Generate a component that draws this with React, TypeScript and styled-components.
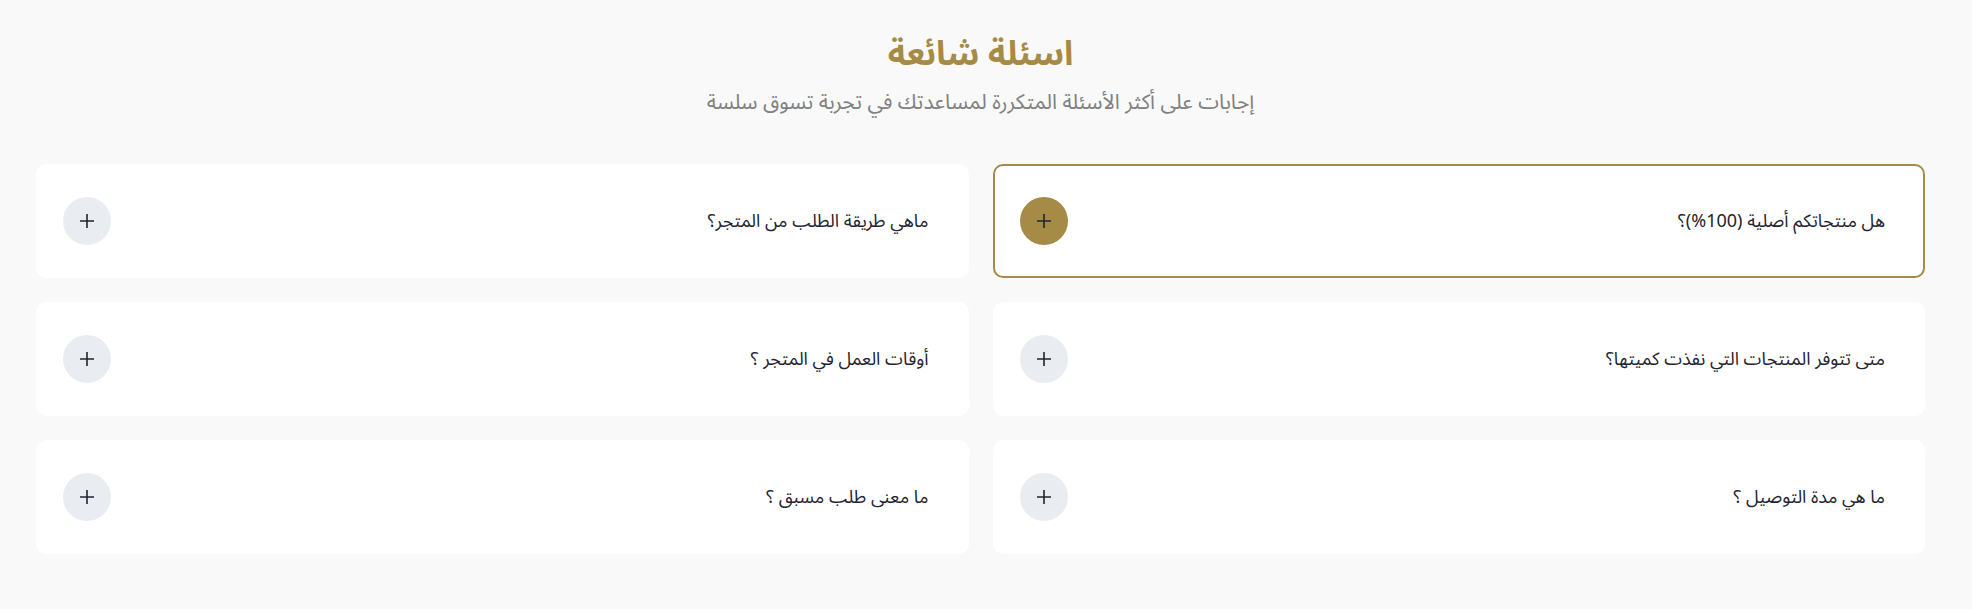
import React from 'react'
import styled, { createGlobalStyle } from 'styled-components'

const GlobalStyle = createGlobalStyle`
    html, body {
        margin: 0;
        padding: 0;
        background: #f9f9f9;
    }
    * {
        box-sizing: border-box;
    }
`;

const questions = [
    'هل منتجاتكم أصلية (100%)؟',
    'ماهي طريقة الطلب من المتجر؟',
    'متى تتوفر المنتجات التي نفذت كميتها؟',
    'أوقات العمل في المتجر ؟',
    'ما هي مدة التوصيل ؟',
    'ما معنى طلب مسبق ؟',
];

const PlusIcon = () => (
    <svg width="18" height="18" viewBox="0 0 18 18" fill="none">
        <path d="M9 2v14M2 9h14" stroke="#1f2430" strokeWidth="1.6" strokeLinecap="butt" />
    </svg>
);

const App = () => {
    return (
        <React.Fragment>
            <GlobalStyle />
            <Section dir="rtl">
                <Header>
                    <Title>اسئلة شائعة</Title>
                    <Subtitle>إجابات على أكثر الأسئلة المتكررة لمساعدتك في تجربة تسوق سلسة</Subtitle>
                </Header>
                <Grid>
                    {questions.map((q, i) => (
                        <Card key={q} $active={i === 0}>
                            <Question>{q}</Question>
                            <Toggle $active={i === 0} aria-label="expand">
                                <PlusIcon />
                            </Toggle>
                        </Card>
                    ))}
                </Grid>
            </Section>
        </React.Fragment>
    );
}

export default App

const Section = styled.section`
    font-family: 'Noto Sans Arabic', 'Noto Kufi Arabic', 'DejaVu Sans', sans-serif;
    padding: 28px 47px 56px 36px;
`;

const Header = styled.div`
    text-align: center;
`;

const Title = styled.h2`
    margin: 0;
    font-size: 34px;
    line-height: 52px;
    font-weight: 700;
    color: #a68b47;
`;

const Subtitle = styled.p`
    margin: 6px 0 0;
    font-size: 21px;
    line-height: 32px;
    font-weight: 400;
    color: #808080;
`;

const Grid = styled.div`
    margin-top: 46px;
    display: grid;
    grid-template-columns: 1fr 1fr;
    gap: 24px;
`;

const Card = styled.div<{ $active?: boolean }>`
    display: flex;
    align-items: center;
    justify-content: space-between;
    background: #ffffff;
    border: 2px solid ${p => (p.$active ? '#a68b47' : 'transparent')};
    border-radius: 10px;
    padding: 31px 38px 31px 25px;
`;

const Question = styled.span`
    font-size: 18px;
    color: #1f2430;
`;

const Toggle = styled.button<{ $active?: boolean }>`
    width: 48px;
    height: 48px;
    border-radius: 50%;
    border: none;
    padding: 0;
    display: flex;
    align-items: center;
    justify-content: center;
    background: ${p => (p.$active ? '#a68b47' : '#e9edf1')};
    cursor: pointer;
    flex-shrink: 0;
`;
